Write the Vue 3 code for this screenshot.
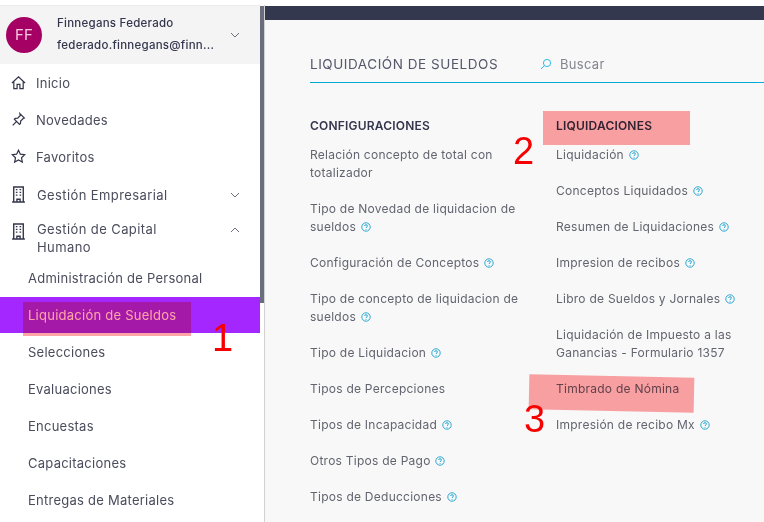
<template>
  <div class="page">
    <aside class="sidebar">
      <div class="user">
        <div class="avatar">FF</div>
        <div class="user-text">
          <div class="user-line">Finnegans Federado</div>
          <div class="user-line">federado.finnegans@finn...</div>
        </div>
        <svg class="chev" viewBox="0 0 10 6"><path d="M1 1l4 4 4-4" /></svg>
      </div>

      <nav class="menu">
        <a v-for="item in topItems" :key="item.label" class="menu-item">
          <svg class="icon" viewBox="0 0 16 16" v-html="item.icon"></svg>
          <span>{{ item.label }}</span>
        </a>

        <a class="menu-item group">
          <svg class="icon" viewBox="0 0 16 16" v-html="building"></svg>
          <span class="group-label">Gestión Empresarial</span>
          <svg class="chev" viewBox="0 0 10 6"><path d="M1 1l4 4 4-4" /></svg>
        </a>
        <a class="menu-item group two-lines">
          <svg class="icon" viewBox="0 0 16 16" v-html="building"></svg>
          <span class="group-label">Gestión de Capital Humano</span>
          <svg class="chev" viewBox="0 0 10 6"><path d="M1 5l4-4 4 4" /></svg>
        </a>

        <a
          v-for="sub in subItems"
          :key="sub"
          class="sub-item"
          :class="{ active: sub === 'Liquidación de Sueldos' }"
        >{{ sub }}</a>
      </nav>
    </aside>
    <div class="scroll-track"><div class="scroll-thumb"></div></div>

    <main class="content">
      <div class="topbar"></div>
      <div class="panel">
        <header class="panel-head">
          <h1>LIQUIDACIÓN DE SUELDOS</h1>
          <svg class="search-icon" viewBox="0 0 12 12"><circle cx="7" cy="5" r="3.6" /><path d="M4.400 7.600L1 11" /></svg>
          <span class="search">Buscar</span>
        </header>

        <div class="columns">
          <section class="column">
            <h2>CONFIGURACIONES</h2>
            <a v-for="link in configLinks" :key="link.text" class="link">
              {{ link.text }}
              <svg v-if="link.help" class="help" viewBox="0 0 10 10"><circle cx="5" cy="5" r="4.200" /><path d="M3.600 4c0-1.800 2.800-1.800 2.800 0 0 1-1.400 1-1.400 2" /><path d="M5 7v.8" /></svg>
            </a>
          </section>
          <section class="column">
            <h2>LIQUIDACIONES</h2>
            <a v-for="link in liqLinks" :key="link.text" class="link">
              {{ link.text }}
              <svg v-if="link.help" class="help" viewBox="0 0 10 10"><circle cx="5" cy="5" r="4.200" /><path d="M3.600 4c0-1.800 2.800-1.800 2.800 0 0 1-1.400 1-1.400 2" /><path d="M5 7v.8" /></svg>
            </a>
          </section>
        </div>
      </div>
    </main>

    <!-- anotaciones encima de la captura -->
    <div class="mark mark-1"></div>
    <div class="mark mark-2"></div>
    <div class="mark mark-3"></div>
    <span class="num num-1">1</span>
    <span class="num num-2">2</span>
    <span class="num num-3">3</span>
  </div>
</template>

<script setup>
const building = '<path d="M3.500 15v-14h9v14M2 15h12M6.500 15v-2.500h3v2.500" /><path class="dots" d="M5.500 3.500h1.500M9 3.500h1.500M5.500 6h1.500M9 6h1.500M5.500 8.500h1.500M9 8.500h1.500" />'

const topItems = [
  {
    label: 'Inicio',
    icon: '<path d="M1 8.500L8 2l7 6.500M3 7v7.500h3.500v-4.500h3v4.500H13V7" />'
  },
  {
    label: 'Novedades',
    icon: '<path d="M9.500 1.800l4.700 4.700-1.200.4-2.700 2.800-.2 2.600-1 .9-5.500-5.500.9-1 2.600-.2 2.800-2.700zM5.500 10.500L1.800 14.200" />'
  },
  {
    label: 'Favoritos',
    icon: '<path d="M8 1.300l2 4.200 4.600.6-3.400 3.200.9 4.600L8 11.700l-4.100 2.200.9-4.600-3.400-3.200 4.600-.6z" />'
  }
]

const subItems = [
  'Administración de Personal',
  'Liquidación de Sueldos',
  'Selecciones',
  'Evaluaciones',
  'Encuestas',
  'Capacitaciones',
  'Entregas de Materiales'
]

const configLinks = [
  { text: 'Relación concepto de total con totalizador' },
  { text: 'Tipo de Novedad de liquidacion de sueldos', help: true },
  { text: 'Configuración de Conceptos', help: true },
  { text: 'Tipo de concepto de liquidacion de sueldos', help: true },
  { text: 'Tipo de Liquidacion', help: true },
  { text: 'Tipos de Percepciones' },
  { text: 'Tipos de Incapacidad', help: true },
  { text: 'Otros Tipos de Pago', help: true },
  { text: 'Tipos de Deducciones', help: true }
]

const liqLinks = [
  { text: 'Liquidación', help: true },
  { text: 'Conceptos Liquidados', help: true },
  { text: 'Resumen de Liquidaciones', help: true },
  { text: 'Impresion de recibos', help: true },
  { text: 'Libro de Sueldos y Jornales', help: true },
  { text: 'Liquidación de Impuesto a las Ganancias - Formulario 1357' },
  { text: 'Timbrado de Nómina' },
  { text: 'Impresión de recibo Mx', help: true }
]
</script>

<style>
html,
body {
  margin: 0;
  background: #fff;
  overflow: hidden;
}
</style>

<style scoped>
.page {
  position: relative;
  display: flex;
  width: 764px;
  height: 522px;
  padding-top: 5px;
  box-sizing: border-box;
  overflow: hidden;
  background: #fff;
  font-family: Inter, "Noto Sans", sans-serif;
  color: #4a4c5c;
}

.sidebar {
  width: 260px;
  flex: none;
  border-top: 1px solid #ececec;
  letter-spacing: 0.25px;
}

.user {
  display: flex;
  align-items: center;
  height: 58px;
  padding: 0 20px 0 6px;
  background: #f4f4f5;
  color: #33364c;
}

.avatar {
  flex: none;
  width: 36px;
  height: 36px;
  border-radius: 50%;
  background: #a50064;
  color: #f3c9df;
  font-size: 15px;
  line-height: 36px;
  text-align: center;
}

.user-text {
  flex: 1;
  margin-left: 15px;
  margin-top: -2px;
  font-size: 11.500px;
  font-weight: 500;
}

.user-line {
  line-height: 22px;
  white-space: nowrap;
}

.chev {
  flex: none;
  width: 10px;
  height: 6px;
  fill: none;
  stroke: #6c6e7c;
  stroke-width: 1;
}

.menu {
  display: flex;
  flex-direction: column;
}

.menu-item {
  display: flex;
  align-items: center;
  height: 37px;
  padding: 0 20px 0 11px;
  font-size: 13px;
}

.menu-item span {
  margin-left: 10px;
}

.icon {
  flex: none;
  width: 15px;
  height: 15px;
  fill: none;
  stroke: #33364c;
  stroke-width: 1.300;
}

.icon :deep(.dots) {
  stroke-width: 1.200;
}

.group {
  height: 38px;
  padding-top: 1px;
  box-sizing: border-box;
  letter-spacing: 0.4px;
}

.group .icon {
  width: 17px;
  height: 17px;
  margin-left: -1px;
}

.group .group-label {
  flex: 1;
  margin-left: 10px;
}

.two-lines {
  align-items: flex-start;
  height: 47px;
  padding-top: 7px;
  line-height: 18px;
}

.two-lines .icon {
  margin-top: 3px;
}

.two-lines .chev {
  margin-top: 7px;
}

.two-lines .group-label {
  padding-right: 30px;
}

.sub-item {
  display: block;
  height: 37px;
  padding-left: 28px;
  font-size: 13px;
  line-height: 36px;
}

.active {
  height: 36px;
  margin-bottom: 1px;
  background: #a427ff;
  color: #fff;
}

.scroll-track {
  width: 4px;
  flex: none;
  border-right: 1px solid #d2d2d2;
}

.scroll-thumb {
  height: 297px;
  margin-top: 1px;
  background: #6a6d7d;
}

.content {
  flex: 1;
  min-width: 0;
  margin-top: 1px;
  background: #f8f8f8;
}

.topbar {
  height: 14px;
  background: #33384f;
}

.panel {
  padding: 32px 0 0 45px;
}

.panel-head {
  display: flex;
  align-items: center;
  height: 24px;
  padding-bottom: 6px;
  border-bottom: 1px solid #00acd7;
}

h1 {
  width: 230px;
  margin: 0;
  font-size: 13.500px;
  font-weight: 400;
  letter-spacing: 0.55px;
  white-space: nowrap;
  color: #55576a;
}

.search-icon {
  width: 12px;
  height: 12px;
  fill: none;
  stroke: #2fbde6;
  stroke-width: 1;
}

.search {
  margin-left: 8px;
  font-size: 13px;
  letter-spacing: 0.3px;
  color: #83858f;
}

.columns {
  display: grid;
  grid-template-columns: 210px 210px;
  column-gap: 36px;
  margin-top: 34px;
}

.column {
  display: flex;
  flex-direction: column;
}

h2 {
  margin: 0 0 11px;
  font-size: 12px;
  line-height: 18px;
  font-weight: 600;
  letter-spacing: 0.2px;
  color: #33364c;
}

.link {
  display: block;
  margin-bottom: 18px;
  font-size: 12px;
  line-height: 18px;
  letter-spacing: 0.25px;
  color: #62646f;
}

.help {
  width: 10px;
  height: 10px;
  margin-left: 1px;
  fill: none;
  stroke: #2aa9d2;
  stroke-width: 1;
  vertical-align: -1px;
}

.mark {
  position: absolute;
  background: #ffa4a7;
  mix-blend-mode: multiply;
}

.mark-1 {
  left: 23px;
  top: 302px;
  width: 168px;
  height: 34px;
}

.mark-2 {
  left: 543px;
  top: 111px;
  width: 147px;
  height: 34px;
}

.mark-3 {
  left: 529px;
  top: 376px;
  width: 165px;
  height: 35px;
  transform: rotate(1.200deg);
}

.num {
  position: absolute;
  font-family: "Liberation Sans", sans-serif;
  font-size: 38px;
  line-height: 38px;
  color: #f60000;
}

.num-1 {
  left: 212px;
  top: 319px;
}

.num-2 {
  left: 513px;
  top: 132px;
}

.num-3 {
  left: 524px;
  top: 400px;
}
</style>
